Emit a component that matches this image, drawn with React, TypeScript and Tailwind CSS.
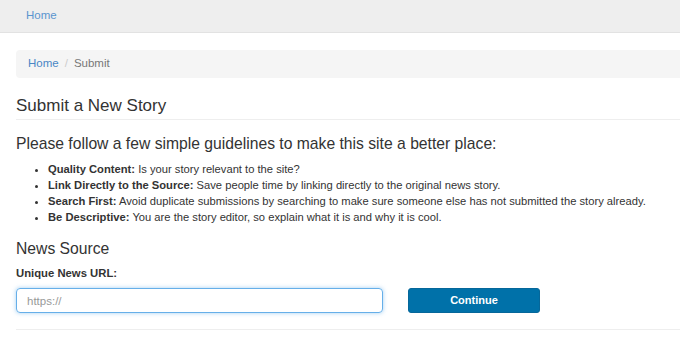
import React from "react"

const guidelines = [
  { title: "Quality Content:", text: "Is your story relevant to the site?" },
  { title: "Link Directly to the Source:", text: "Save people time by linking directly to the original news story." },
  { title: "Search First:", text: "Avoid duplicate submissions by searching to make sure someone else has not submitted the story already." },
  { title: "Be Descriptive:", text: "You are the story editor, so explain what it is and why it is cool." },
]

export default function App() {
  return (
    <div className="w-[680px] h-[343px] overflow-hidden bg-white text-[#333] font-['Liberation_Sans',Arial,sans-serif]">
      <nav className="h-[33px] bg-[#eeeeee] border-b border-[#e2e2e2] flex items-center pl-[26px]">
        <a href="#" className="text-[11.5px] text-[#5b95cf]">Home</a>
      </nav>

      <div className="ml-4 w-[720px]">
        <ol className="mt-[17px] h-[28px] bg-[#f5f5f5] rounded-[4px] flex items-center px-3 text-[11.5px]">
          <li><a href="#" className="text-[#4a87c5]">Home</a></li>
          <li className="px-[6px] text-[#ccc]">/</li>
          <li className="text-[#777]">Submit</li>
        </ol>

        <h1 className="mt-[17px] text-[17px] leading-[22px]">Submit a New Story</h1>
        <hr className="mt-[2px] border-t border-[#eee]" />

        <h2 className="mt-[14px] text-[15.7px] leading-[20px]">Please follow a few simple guidelines to make this site a better place:</h2>
        <ul className="mt-[7px] pl-[32px] list-disc text-[11.2px] leading-[16px]">
          {guidelines.map(g => (
            <li key={g.title}>
              <b>{g.title}</b> {g.text}
            </li>
          ))}
        </ul>

        <h3 className="mt-[13px] text-[15.7px] leading-[22px]">News Source</h3>
        <label className="block mt-[5px] text-[11.3px] leading-[16px] font-bold">Unique News URL:</label>
        <div className="mt-[7px] flex items-center gap-[25px]">
          <input
            type="text"
            placeholder="https://"
            className="w-[367px] h-[25px] px-[10px] text-[11.5px] border border-[#66afe9] rounded-[4px] shadow-[0_0_4px_rgba(102,175,233,0.6)] outline-none placeholder:text-[#999]"
          />
          <button className="w-[132px] h-[25px] bg-[#0071a9] border border-[#06679a] rounded-[3px] text-white text-[11px] font-bold">
            Continue
          </button>
        </div>
        <hr className="mt-[16px] border-t border-[#eee]" />
      </div>
    </div>
  )
}
